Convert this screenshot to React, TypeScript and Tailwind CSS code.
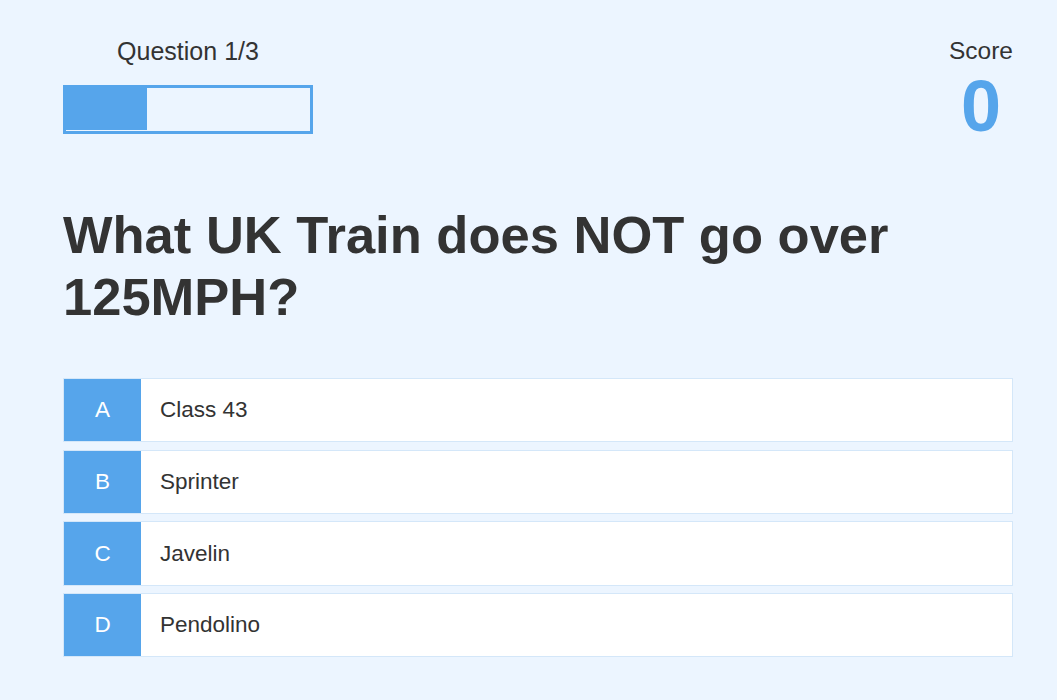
import React from "react";

interface Choice {
  prefix: string;
  text: string;
}

const choices: Choice[] = [
  { prefix: "A", text: "Class 43" },
  { prefix: "B", text: "Sprinter" },
  { prefix: "C", text: "Javelin" },
  { prefix: "D", text: "Pendolino" },
];

function ChoiceRow({ choice }: { choice: Choice }) {
  return (
    <div className="flex h-[64.2px] mb-[7.5px] border border-[#d4e7f9] bg-white cursor-pointer">
      <div className="w-[77px] flex items-center justify-center bg-[#56a5eb] text-white text-[22.5px]">
        {choice.prefix}
      </div>
      <p className="flex items-center pl-[19px] text-[22.5px] text-[#333]">
        {choice.text}
      </p>
    </div>
  );
}

export default function App() {
  const current = 1;
  const total = 3;
  const score = 0;

  return (
    <div className="min-h-screen bg-[#ecf5ff] pl-[63px] pt-[37px] text-[#333] font-['Liberation_Sans',Arial,sans-serif]">
      <div className="w-[950px]">
        {/* HUD */}
        <div className="flex justify-between items-start">
          <div className="w-[250px] flex flex-col items-center">
            <p className="text-[25px] leading-[normal]">
              Question {current}/{total}
            </p>
            <div className="mt-[19px] w-[250px] h-[49px] border-[3px] border-[#56a5eb]">
              <div
                className="h-[42px] bg-[#56a5eb]"
                style={{ width: `${(current / total) * 100}%` }}
              />
            </div>
          </div>
          <div className="flex flex-col items-center">
            <p className="text-[24.5px] leading-[normal]">Score</p>
            <p className="text-[72px] font-bold leading-[normal] text-[#56a5eb]">
              {score}
            </p>
          </div>
        </div>

        {/* Question */}
        <h2 className="mt-[57px] text-[52.5px] font-bold leading-[62px]">
          What UK Train does NOT go over 125MPH?
        </h2>

        {/* Choices */}
        <div className="mt-[50px]">
          {choices.map((c) => (
            <ChoiceRow key={c.prefix} choice={c} />
          ))}
        </div>
      </div>
    </div>
  );
}
